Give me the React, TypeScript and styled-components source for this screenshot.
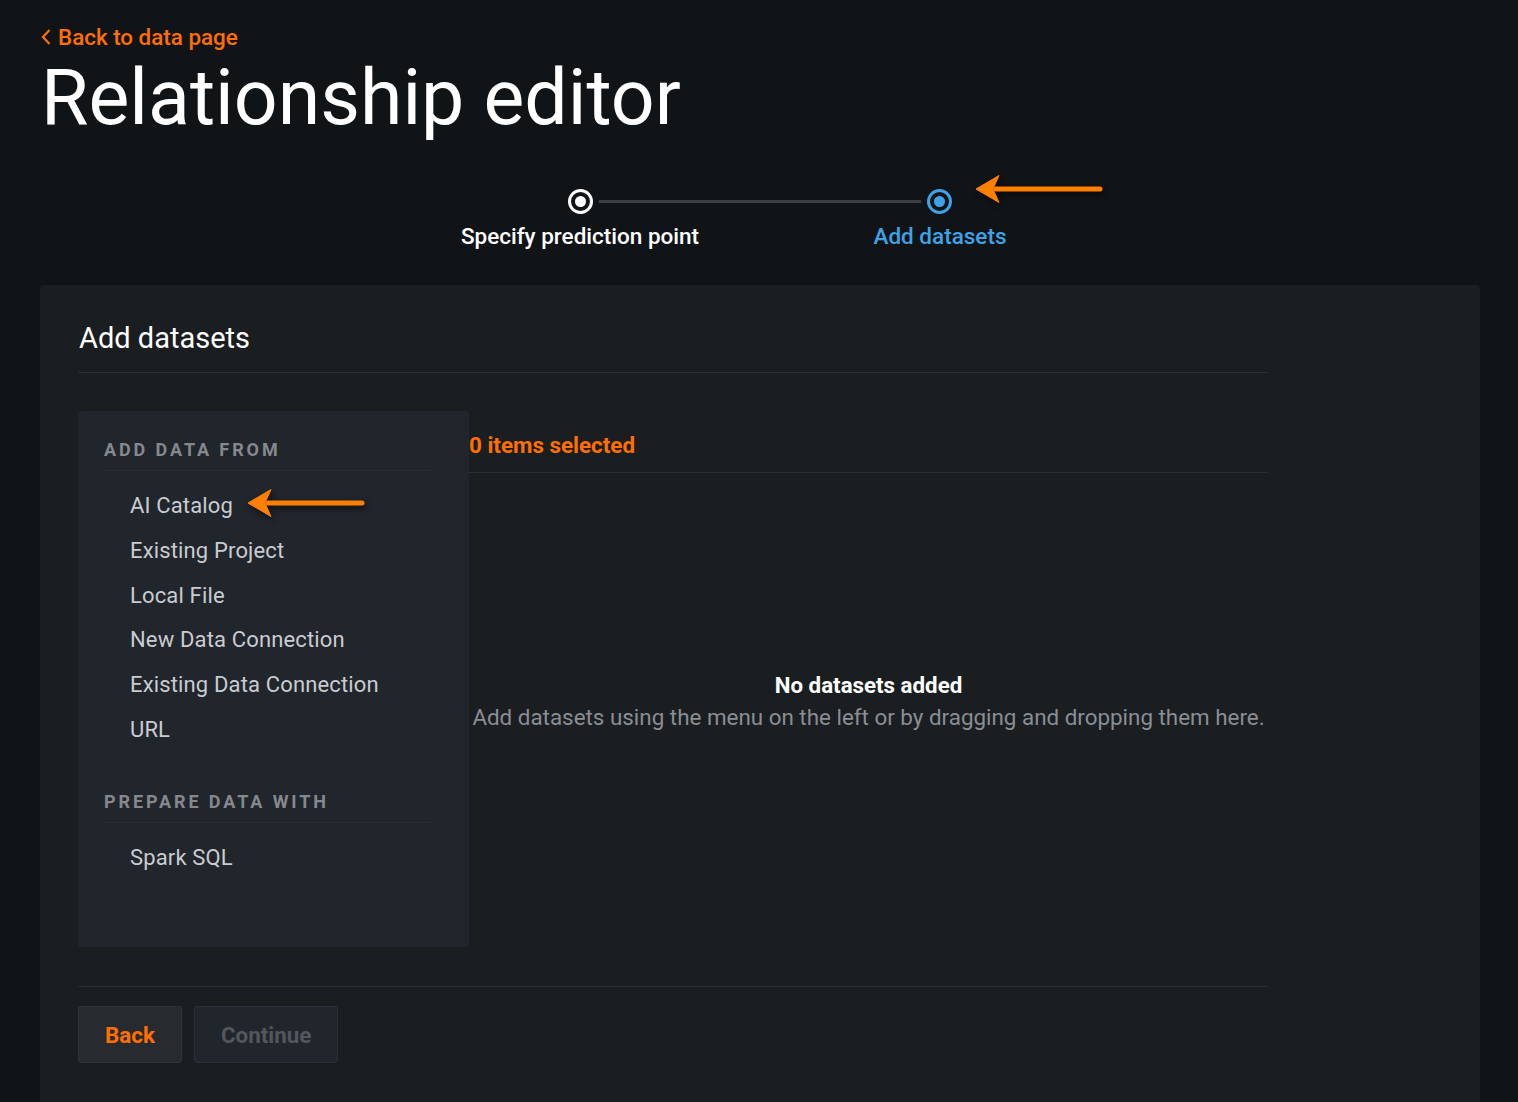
import React, { FC } from 'react';
import styled, { createGlobalStyle } from 'styled-components';

const orange = '#ff6f00';
const arrowOrange = '#ff8000';
const blue = '#3ea3e6';

const GlobalStyle = createGlobalStyle`
  html, body {
    margin: 0;
    padding: 0;
    background: #111417;
    font-family: Roboto, "Liberation Sans", sans-serif;
    color: #fff;
  }
  * { box-sizing: border-box; }
`;

const Page = styled.div`
  height: 1102px;
  overflow: hidden;
  padding: 0 38px 0 40px;
`;

const BackLink = styled.a`
  display: inline-flex;
  align-items: center;
  gap: 6px;
  margin-top: 24px;
  color: ${orange};
  font-size: 22.4px;
  font-weight: 500;
  text-decoration: none;
  line-height: 26px;
`;

const Title = styled.h1`
  margin: 3px 0 0 1px;
  font-size: 77px;
  font-weight: 400;
  line-height: 90px;
`;

const Stepper = styled.div`
  position: relative;
  width: 720px;
  margin: 46px auto 0;
  display: flex;
  flex-direction: column;
  align-items: center;
`;

const Track = styled.div`
  width: 384px;
  display: flex;
  align-items: center;
`;

const Dot = styled.span<{ $color: string }>`
  width: 25px;
  height: 25px;
  border-radius: 50%;
  border: 3px solid ${p => p.$color};
  display: flex;
  align-items: center;
  justify-content: center;
  &::after {
    content: '';
    width: 11px;
    height: 11px;
    border-radius: 50%;
    background: ${p => p.$color};
  }
`;

const Connector = styled.span`
  flex: 1;
  height: 3px;
  margin: 0 6px;
  background: #3c3f43;
`;

const Labels = styled.div`
  display: grid;
  grid-template-columns: 360px 360px;
  margin-top: 8px;
`;

const StepLabel = styled.span<{ $active?: boolean }>`
  text-align: center;
  font-size: 22.5px;
  font-weight: 500;
  line-height: 28px;
  color: ${p => (p.$active ? blue : '#fff')};
`;

const ArrowMark = styled.svg`
  position: absolute;
  filter: drop-shadow(2px 3px 3px rgba(0, 0, 0, 0.6));
`;

const Panel = styled.section`
  margin-top: 35px;
  background: #1a1e21;
  border-radius: 4px;
  padding: 0 38px 40px 38px;
  min-height: 900px;
`;

const Inner = styled.div`
  width: 1190px;
`;

const PanelTitle = styled.h2`
  margin: 0;
  padding: 36px 0 17px 1px;
  font-size: 29px;
  font-weight: 400;
  line-height: 34px;
  border-bottom: 1px solid #2a2e32;
`;

const Body = styled.div`
  display: flex;
  margin-top: 38px;
`;

const Sidebar = styled.nav`
  width: 391px;
  height: 536px;
  background: #21252c;
  border-radius: 3px;
  padding: 26px 38px 0 26px;
`;

const GroupHeading = styled.div<{ $spaced?: boolean }>`
  margin-top: ${p => (p.$spaced ? '36px' : '0')};
  padding-bottom: 7px;
  border-bottom: 1px solid #2a2e33;
  font-size: 18px;
  font-weight: 700;
  letter-spacing: 2.9px;
  color: #85898e;
  line-height: 26px;
`;

const ItemList = styled.ul`
  list-style: none;
  margin: 13px 0 0;
  padding: 0;
`;

const Item = styled.li`
  position: relative;
  padding-left: 26px;
  font-size: 22px;
  letter-spacing: 0.15px;
  line-height: 44.8px;
  color: #c9ccd0;
`;

const Main = styled.div`
  flex: 1;
  display: flex;
  flex-direction: column;
`;

const Selected = styled.div`
  padding: 19px 0 12px;
  font-size: 22.4px;
  font-weight: 700;
  line-height: 30px;
  color: ${orange};
  border-bottom: 1px solid #2a2e32;
`;

const Empty = styled.div`
  flex: 1;
  display: flex;
  flex-direction: column;
  align-items: center;
  padding-top: 197px;
`;

const EmptyTitle = styled.div`
  font-size: 22.3px;
  font-weight: 700;
  line-height: 30px;
  color: #fff;
`;

const EmptyText = styled.div`
  font-size: 22.4px;
  line-height: 34px;
  color: #8a8e93;
`;

const Footer = styled.div`
  margin-top: 39px;
  padding-top: 19px;
  border-top: 1px solid #2a2e32;
  display: flex;
  gap: 12px;
`;

const Button = styled.button<{ $primary?: boolean }>`
  height: 57px;
  padding: 0 26px;
  border-radius: 3px;
  border: 1px solid ${p => (p.$primary ? '#30343a' : '#2c3036')};
  background: ${p => (p.$primary ? '#272b2f' : '#21252c')};
  color: ${p => (p.$primary ? orange : '#53575c')};
  font-family: Roboto, "Liberation Sans", sans-serif;
  font-size: 22.4px;
  font-weight: 700;
`;

const Arrow: FC<{ width: number; style?: React.CSSProperties }> = ({ width, style }) => (
  <ArrowMark width={width} height={40} viewBox={`0 0 ${width} 40`} style={style}>
    <path d={`M${width - 3} 20 L22 20`} stroke={arrowOrange} strokeWidth={5} strokeLinecap="round" />
    <path d="M2 20 L25 6.5 L19 20 L25 33.5 Z" fill={arrowOrange} stroke={arrowOrange} strokeWidth={1} strokeLinejoin="round" />
  </ArrowMark>
);

const sources = [
  'AI Catalog',
  'Existing Project',
  'Local File',
  'New Data Connection',
  'Existing Data Connection',
  'URL',
];

export default function App() {
  return (
    <Page>
      <GlobalStyle />
      <BackLink href="#">
        <svg width="12" height="18" viewBox="0 0 12 18">
          <path d="M9.5 2 L3 9 L9.5 16" fill="none" stroke={orange} strokeWidth={2.2} />
        </svg>
        Back to data page
      </BackLink>
      <Title>Relationship editor</Title>

      <Stepper>
        <Track>
          <Dot $color="#fff" />
          <Connector />
          <Dot $color={blue} />
        </Track>
        <Labels>
          <StepLabel>Specify prediction point</StepLabel>
          <StepLabel $active>Add datasets</StepLabel>
        </Labels>
        <Arrow width={129} style={{ left: 574, top: -20 }} />
      </Stepper>

      <Panel>
        <Inner>
          <PanelTitle>Add datasets</PanelTitle>
          <Body>
            <Sidebar>
              <GroupHeading>ADD DATA FROM</GroupHeading>
              <ItemList>
                {sources.map((s, i) => (
                  <Item key={s}>
                    {s}
                    {i === 0 && <Arrow width={119} style={{ left: 142, top: -1 }} />}
                  </Item>
                ))}
              </ItemList>
              <GroupHeading $spaced>PREPARE DATA WITH</GroupHeading>
              <ItemList>
                <Item>Spark SQL</Item>
              </ItemList>
            </Sidebar>
            <Main>
              <Selected>0 items selected</Selected>
              <Empty>
                <EmptyTitle>No datasets added</EmptyTitle>
                <EmptyText>Add datasets using the menu on the left or by dragging and dropping them here.</EmptyText>
              </Empty>
            </Main>
          </Body>
          <Footer>
            <Button $primary>Back</Button>
            <Button>Continue</Button>
          </Footer>
        </Inner>
      </Panel>
    </Page>
  );
}
